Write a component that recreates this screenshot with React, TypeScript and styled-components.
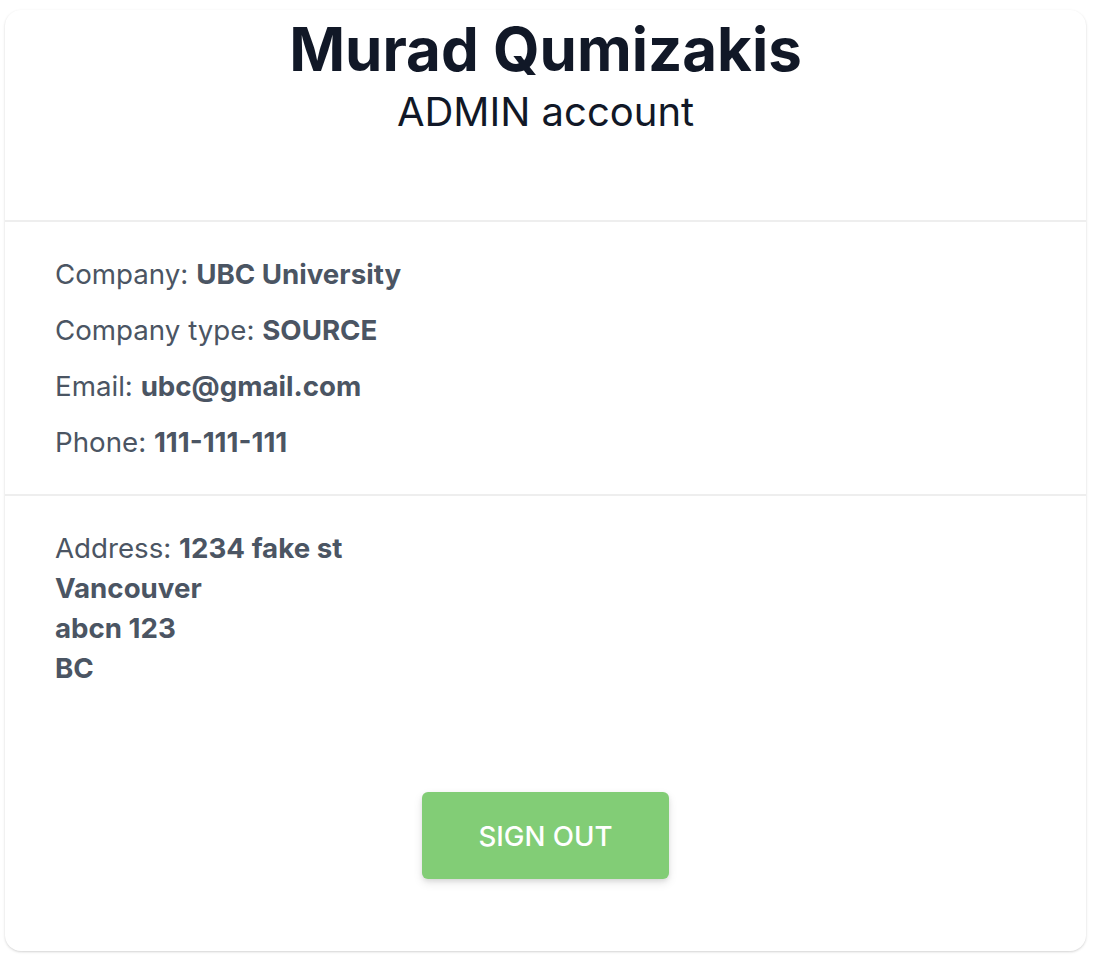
import styled, { createGlobalStyle } from "styled-components";

const GlobalStyle = createGlobalStyle`
    body {
        margin: 0;
        background: #fff;
        font-family: Inter, "Noto Sans", sans-serif;
    }
`;

const Page = styled.main`
    padding: 10px 8px 8px 5px;
`;

const Card = styled.article`
    display: flex;
    flex-direction: column;
    background-color: #fff;
    border-radius: 16px;
    box-shadow: 0 1px 3px rgba(0, 0, 0, 0.12), 0 1px 2px rgba(0, 0, 0, 0.06);
    height: 941px;
    box-sizing: border-box;
`;

const Header = styled.header`
    height: 212px;
    box-sizing: border-box;
    padding-top: 5px;
    text-align: center;
    border-bottom: 2px solid #eeeeee;
`;

const Name = styled.h1`
    margin: 0;
    font-size: 60px;
    line-height: 68px;
    font-weight: 700;
    color: #111827;
`;

const Role = styled.p`
    margin: 6px 0 0;
    font-size: 40px;
    line-height: 46px;
    color: #111827;
`;

const Section = styled.section<{ $grow?: boolean }>`
    display: flex;
    flex-direction: column;
    padding: 32px 50px 0;
    ${(p) => (p.$grow ? "flex: 1;" : "height: 274px; box-sizing: border-box; border-bottom: 2px solid #eeeeee;")}
`;

const Row = styled.p`
    margin: 0 0 16px;
    font-size: 27.7px;
    line-height: 40px;
    color: #4b5563;
`;

const Value = styled.b`
    font-weight: 700;
`;

const Actions = styled.div`
    display: flex;
    justify-content: center;
    margin-top: 88px;
`;

const SignOut = styled.button`
    width: 247px;
    height: 87px;
    border: none;
    border-radius: 6px;
    background-color: #82cd76;
    color: #fff;
    font-family: Inter, "Noto Sans", sans-serif;
    font-size: 27.7px;
    font-weight: 500;
    text-transform: uppercase;
    box-shadow: 0 4px 10px rgba(0, 0, 0, 0.1), 0 2px 4px rgba(0, 0, 0, 0.08);
    cursor: pointer;
`;

const App = () => {
    return (
        <Page>
            <GlobalStyle />
            <Card>
                <Header>
                    <Name>Murad Qumizakis</Name>
                    <Role>ADMIN account</Role>
                </Header>
                <Section>
                    <Row>Company: <Value>UBC University</Value></Row>
                    <Row>Company type: <Value>SOURCE</Value></Row>
                    <Row>Email: <Value>ubc@gmail.com</Value></Row>
                    <Row>Phone: <Value>111-111-111</Value></Row>
                </Section>
                <Section $grow>
                    <Row>
                        Address: <Value>1234 fake st</Value>
                        <br />
                        <Value>Vancouver</Value>
                        <br />
                        <Value>abcn 123</Value>
                        <br />
                        <Value>BC</Value>
                    </Row>
                    <Actions>
                        <SignOut>Sign out</SignOut>
                    </Actions>
                </Section>
            </Card>
        </Page>
    );
};

export default App;
